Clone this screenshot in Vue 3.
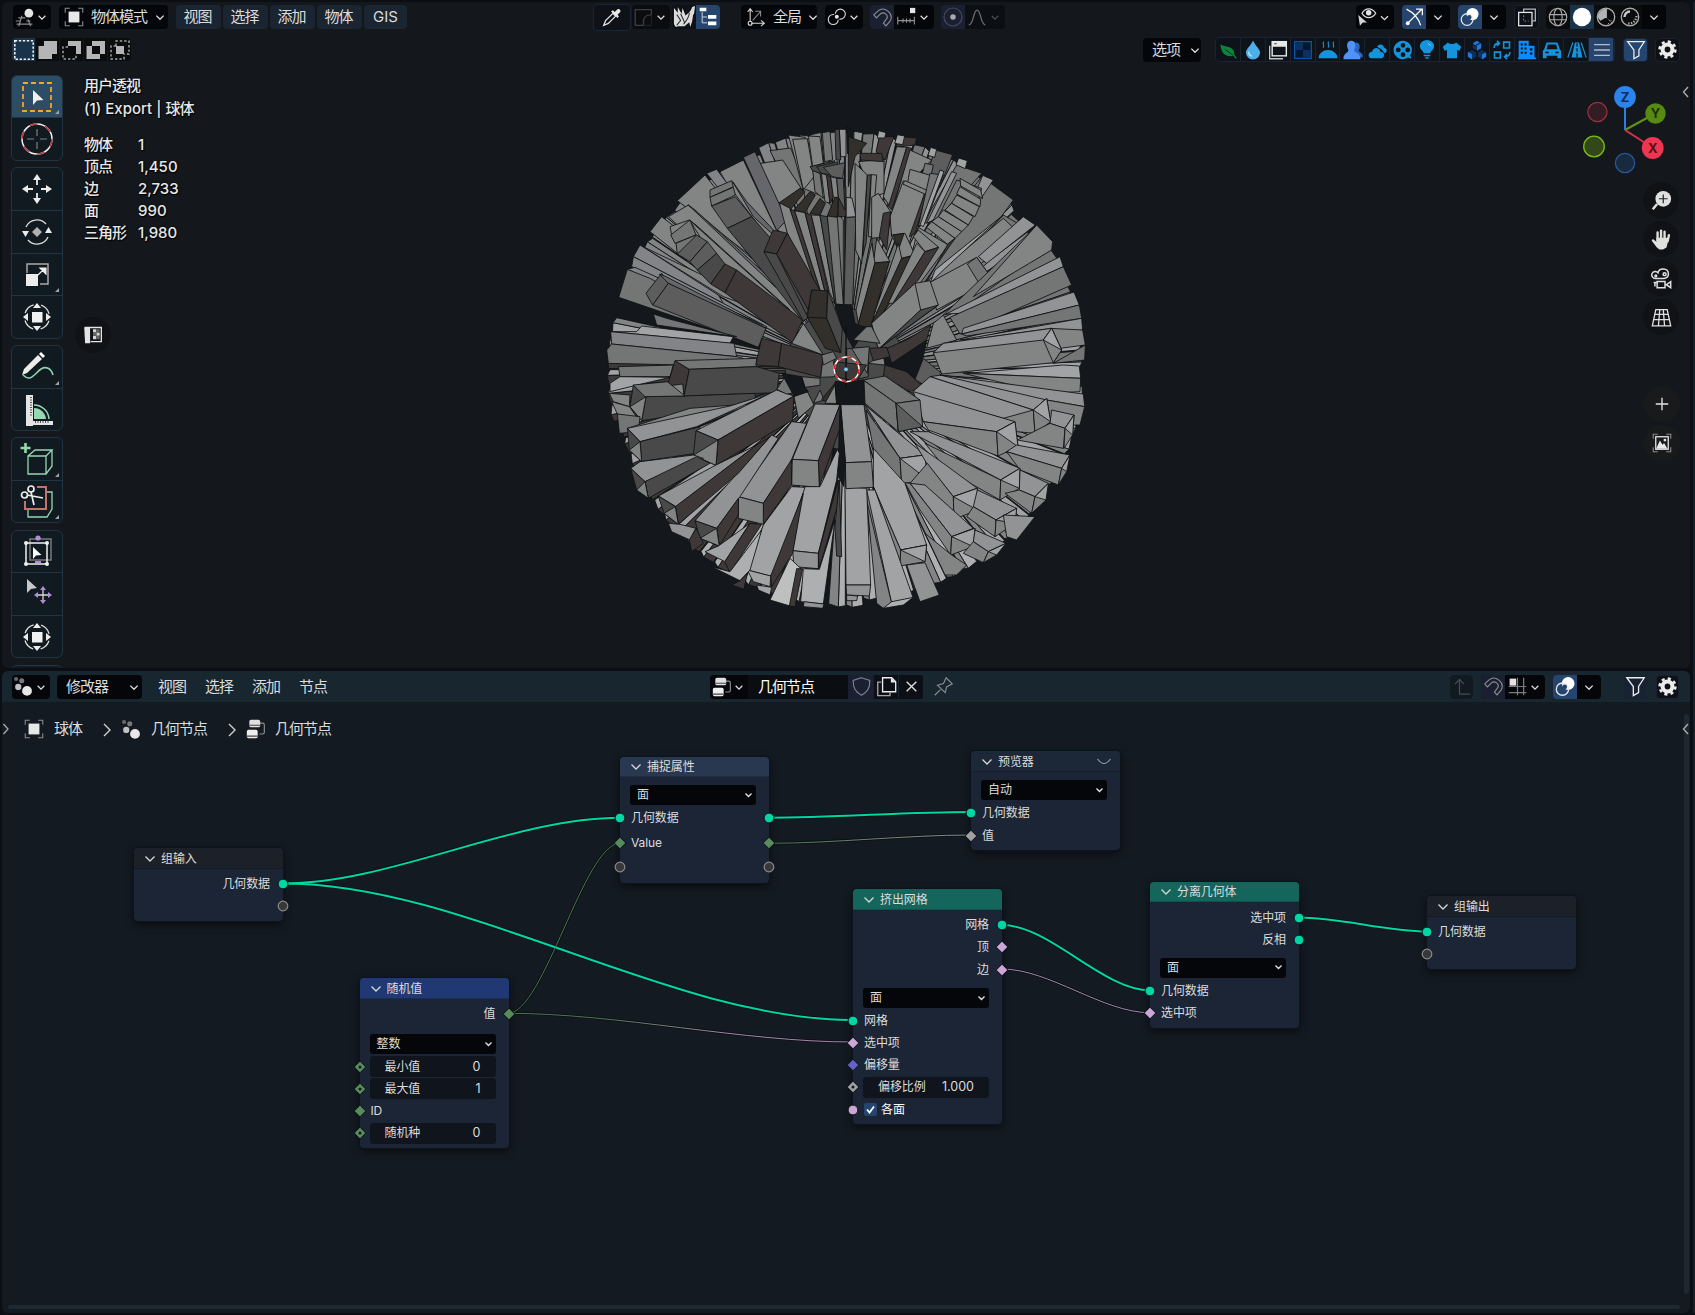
<script setup>
import { h } from 'vue'

const S = 'fill="none" stroke="#d8d8d8" stroke-width="1.3"'
const G = 'fill="none" stroke="#8a8c8f" stroke-width="1.3"'
const B = 'fill="#1593dc"'

const icons = {
  down: '<path d="M8 10.500l4 4 4-4" fill="none" stroke="#dcdcdc" stroke-width="1.500"/>',
  downDim: '<path d="M8 10.500l4 4 4-4" fill="none" stroke="#4a4d50" stroke-width="1.500"/>',
  view3d: `<path d="M5 12.500h8M3 19.500h18M9 10L5.500 22M16 14l3 8" ${G}/><path d="M2 16h5M14 16h5" ${G}/><circle cx="17" cy="7" r="5" fill="#e4e4e4"/><path d="M14.500 5a3.500 3.500 0 0 1 2-1.500" stroke="#fff" fill="none"/>`,
  object: `<path d="M1.500 7V1.500H7M17 1.500h5.500V7M22.500 17v5.500H17M7 22.500H1.500V17" ${G}/><rect x="5.500" y="5.500" width="13" height="13" fill="#e8e8e8"/>`,
  selNew: '<rect x="2.800" y="2.800" width="18.400" height="18.400" fill="none" stroke="#f2f2f2" stroke-width="1.600" stroke-dasharray="2.400 1.600"/>',
  selAdd: '<path d="M8 3h13v13h-5v5H2.500V8H8z" fill="#b4b5b5"/>',
  selSub: '<path d="M8 3h13v13h-5V8H8z" fill="#b4b5b5"/><path d="M8 9H3v12h13v-5" fill="none" stroke="#a0a1a1" stroke-width="1.500" stroke-dasharray="2.400 2"/>',
  selXor: '<path fill-rule="evenodd" d="M8 3h13v13h-5v5H2.500V8H8zM8 8v8h8V8z" fill="#b4b5b5"/>',
  selAnd: '<path d="M8 8V3h13v13h-5M8 8H3v13h13v-5" fill="none" stroke="#a0a1a1" stroke-width="1.500" stroke-dasharray="2.400 2"/><rect x="8" y="8" width="8" height="8" fill="#b4b5b5"/>',
  eyedropper: '<path d="M3 21l2-5 8-8 3 3-8 8z" fill="none" stroke="#e0e0e0" stroke-width="1.400"/><path d="M11 6l7 7 1.500-1.500-1.500-2 3-3c1-2-1-4-3-3l-3 3-2-2z" fill="#e8e8e8"/>',
  corner: '<path d="M2.500 3h18.500v6c-7 0-9 4-9 7v5H2.500z" fill="none" stroke="#3c3e41" stroke-width="1.500"/><path d="M21 9v12H12" fill="none" stroke="#26282b"/>',
  rhino: '<path d="M1 2l4 5 0-6 4 7 1-6 3 8c2-2 5-3 7-9l3-1-1 8-1 1-1 7-2 6-1-5-5 4H5l-2 1-2-3z" fill="#dcdcdc"/><path d="M4 9l4 6-4 5M8 8l4 9M17 7c0 5-3 8-6 12" stroke="#2a2d32" stroke-width="1.100" fill="none"/>',
  outliner: '<path d="M5 6v13h6M5 12h6" fill="none" stroke="#c9d2df" stroke-width="1.200"/><path d="M2 1h8v4H2zM12 9.500h10v4.500H12zM12 17.500h10V22H12z" fill="#fff"/>',
  axes: `<path d="M5 18V3M2 6l3-4 3 4M6 19.500h15M18 16l4 3.500L18 23" ${S}/><circle cx="5" cy="19.500" r="2.400" ${S}/><path d="M8 16l9-10M11 5h6.500v6.500" ${G}/>`,
  pivot: `<circle cx="7.500" cy="15" r="6" ${S}/><circle cx="16" cy="8.500" r="6" ${S}/><circle cx="11.800" cy="11.800" r="4" fill="#04060a"/><circle cx="11.800" cy="11.800" r="2.400" fill="#e4e4e4"/>`,
  magnet: `<path d="M2 9l5-4.500c7-6 18 3 14 11l-5 6-3-3 4-5.500c2-4-3.500-8-7-5.500l-5 5z" ${G}/>`,
  increments: '<path d="M2 11v9M8 13v5M12 13v5M16 13v5M21 11v9M2 15.500h19" fill="none" stroke="#8e9092" stroke-width="1.300"/><rect x="16" y="1" width="6" height="6" fill="#e4e4e4"/>',
  propEdit: '<circle cx="12" cy="12" r="9.800" fill="none" stroke="#44495c" stroke-width="1.300"/><circle cx="12" cy="12" r="3" fill="#a8aaae"/>',
  falloff: '<path d="M2 20.500c6 0 5-17 9.500-17s4 17 9.500 17" fill="none" stroke="#6a6c6f" stroke-width="1.500"/>',
  eye: '<path d="M6 7.500c4-7 12-7 16.500 0-4.500 7-12.500 7-16.500 0z" fill="none" stroke="#dcdcdc" stroke-width="1.600"/><circle cx="14" cy="7" r="3.300" fill="#e4e4e4"/><path d="M1.500 9.500l2 13 3.500-4 5 0z" fill="#d4d4d4"/>',
  gizmo: '<path d="M3 2.500c8 4 14 9 17 19.500M4 20L21 3M14.500 2.500H22V10" fill="none" stroke="#fff" stroke-width="1.500"/><circle cx="4.500" cy="19.500" r="2.300" fill="#fff"/>',
  overlay: '<circle cx="15" cy="8.500" r="7.300" fill="#fff"/><circle cx="8.500" cy="15" r="7" fill="none" stroke="#e8e8e8" stroke-width="1.500"/><circle cx="11" cy="12.500" r="2.800" fill="#23456e"/>',
  xray: '<path d="M8 6V2.500h14v14h-3" fill="none" stroke="#b8b8b8" stroke-width="1.500"/><rect x="2" y="6.500" width="16" height="16" fill="none" stroke="#e8e8e8" stroke-width="1.500"/><path d="M8 10v7h6" fill="none" stroke="#999" stroke-dasharray="2 2"/>',
  wire: '<g fill="none" stroke="#a8a8a8" stroke-width="1.300"><circle cx="12" cy="12" r="9.500"/><ellipse cx="12" cy="12" rx="4.500" ry="9.500"/><path d="M3 9.500h18M3 15h18"/></g>',
  solid: '<circle cx="12" cy="12" r="10" fill="#fff"/>',
  material: '<circle cx="12" cy="12" r="9.500" fill="none" stroke="#a8a8a8" stroke-width="1.500"/><path d="M13 13V3a9.500 9.500 0 0 0-10 9z M3 12a9 9 0 0 0 3 4l7-4z" fill="#b4b4b4"/><path d="M12 12l7 7M14 20l5-6" stroke="#a8a8a8" stroke-dasharray="2 2"/>',
  rendered: '<circle cx="12" cy="12" r="9.500" fill="none" stroke="#a8a8a8" stroke-width="1.500"/><path d="M6 12a6 6 0 0 1 6-6" stroke="#c8c8c8" stroke-width="2.600" fill="none"/><path d="M19 11a8 8 0 0 1-9 8" stroke="#a8a8a8" stroke-width="2.500" stroke-dasharray="1.500 1.500" fill="none"/>',
  leaf: '<path d="M3 5c3 3 9 2 13 5 4 3 4 6 3 9-6 1-15 1-16-14z" fill="#0a8540"/><path d="M8 11l11 8" stroke="#0b2a1a" stroke-width="1.200"/><path d="M18 17l4 5" stroke="#0a8540" stroke-width="1.600"/>',
  drop: '<path d="M12 0.500c3 7 8.500 10 8.500 14.500a8.500 8.500 0 0 1-17 0c0-4.500 5.500-7.500 8.500-14.500z" fill="#4db0ea"/><path d="M7 14a5 5 0 0 0 4 5.500" stroke="#c8ecff" stroke-width="1.500" fill="none"/>',
  windowIc: '<path d="M2 7v15.500h16" fill="none" stroke="#c4c4c4" stroke-width="1.600"/><rect x="5" y="2" width="17" height="17" fill="none" stroke="#e8e8e8" stroke-width="1.700"/><path d="M5 2h17v6H5z" fill="#e8e8e8"/><path d="M7.500 4.500h3" stroke="#222"/>',
  checker: '<rect x="2" y="2" width="20" height="20" fill="#06162e" stroke="#0a56b4" stroke-width="1.500"/><path d="M3 3h9v9H3zM12 12h9v9h-9z" fill="#0c2f66"/>',
  steam: `<path d="M0.500 22a11.500 10 0 0 1 23 0z" ${B}/><path d="M7 2c-3 3 2 4-1 7M13 2c-3 3 2 4-1 7M19 2c-3 3 2 4-1 7" stroke="#1593dc" stroke-width="1.400" fill="none"/>`,
  people: '<path d="M15 3c6-1 6 7 3.500 10l5 4v4H12z" fill="#2d64c0"/><path d="M10 1c6 0 6 7 3.500 11 0 4 6.500 2 7.500 11H0.500c0-8 6-7 6-11C4 8 4 1 10 1z" fill="#4c94f8"/>',
  cloud: `<path d="M11 8c2-4 8-3 8 1 4 1 5 5 1 7l-4-5z" ${B}/><path d="M4 22c-5-1-4-8 1-8 1-6 9-6 10 0 5 0 6 6 2 8z" ${B}/>`,
  reel: `<path fill-rule="evenodd" d="M12 1a11 11 0 1 0 6 20l4.500 1.500-2-4A11 11 0 0 0 12 1zM12 3.500a2.900 2.900 0 1 1 0 5.800 2.900 2.900 0 0 1 0-5.800zM12 14.700a2.900 2.900 0 1 1 0 5.800 2.900 2.900 0 0 1 0-5.800zM6.300 9a2.900 2.900 0 1 1 0 5.800 2.900 2.900 0 0 1 0-5.800zM17.700 9a2.900 2.900 0 1 1 0 5.800 2.900 2.900 0 0 1 0-5.800z" ${B}/>`,
  bulb: `<path d="M8 16c0-3-4.500-4-4.500-8.500a8.500 7.500 0 0 1 17 0C20.500 12 16 13 16 16z" ${B}/><path d="M8 18.500h8M10 21.500h4" stroke="#1593dc" stroke-width="1.700"/><path d="M13 4l4 3" stroke="#9bd8ff"/>`,
  shirt: `<path d="M7 3c3 2.500 7 2.500 10 0l6 5-2 5-3-1v10H6V12l-3 1-2-5z" ${B}/>`,
  cubes: '<path d="M12 1l5 3v6l-5 3-5-3V4zM6 12l5 3v5l-5 3-5-3v-5zM18 12l5 3v5l-5 3-5-3v-5z" fill="#0f2f5c"/><path d="M12 6.500l5-2.500v6l-5 3zM6 17l-5-3v6l5 3.500zM18 17l5-2v5l-5 3.500zM7 4l5-3 3 2-5 3z" fill="#2178dc"/>',
  swap: '<path d="M2.500 9.500c0-4 2-5.500 6-5.500M6 1l3 3-3 3M21.500 14.500c0 4-2 5.500-6 5.500M18 17l-3 3 3 3M14 2.500h7v7h-7zM3 14.500h7v7H3z" fill="none" stroke="#1593dc" stroke-width="1.900"/>',
  building: '<path fill-rule="evenodd" d="M2 1h12v6h7v14h2v2H1v-2h1zM4.500 4v2.500H7V4zM9 4v2.500h2.500V4zM4.500 9v2.500H7V9zM9 9v2.500h2.500V9zM4.500 14v2.500H7V14zM9 14v2.500h2.500V14zM15.500 10v2.500h3V10zM15.500 15v2.500h3V15z" fill="#0b8bff"/>',
  car: `<path fill-rule="evenodd" d="M5.500 3h13l3 8.500 1.500 1.500v9h-4.500v-3h-13v3H1v-9l1.500-1.500zM7 5.500L5.500 11h13L17 5.500zM4 14v2h4v-2zM16 14v2h4v-2z" ${B}/>`,
  road: `<path d="M7 3L1 21M17 3l6 18" stroke="#1593dc" stroke-width="1.400"/><path d="M9.500 3h5l4 18h-13z" ${B}/><path d="M12 4v4M12 10v4M12 16v5" stroke="#0c1a26" stroke-width="1.500"/>`,
  list: '<path d="M2.500 5.500h19M2.500 12h19M2.500 18.500h19" stroke="#b8bcc4" stroke-width="1.600"/>',
  filter: '<path d="M2 2h20l-6.500 10v7L9.500 22.500V12z" fill="none" stroke="#eee" stroke-width="1.500"/>',
  gear: '<circle cx="12" cy="12" r="5.600" fill="none" stroke="#ececec" stroke-width="4.600"/><circle cx="12" cy="12" r="9" fill="none" stroke="#ececec" stroke-width="3" stroke-dasharray="3.534 3.534"/>',
  nodesMod: '<circle cx="16" cy="17" r="5.600" fill="#e8e8e8"/><circle cx="6" cy="12.500" r="3.600" fill="#c0c0c0"/><circle cx="10" cy="5.500" r="2.900" fill="#77797c"/><circle cx="3.500" cy="3.500" r="2.300" fill="#6a6c70"/>',
  tree: '<path d="M16 5h4q2 0 2 2v9q0 2-2 2h-4" fill="none" stroke="#8c8e90" stroke-width="1.400"/><rect x="4" y="1" width="13" height="9" rx="2" fill="#e0e0e0"/><rect x="1" y="13" width="13" height="10" rx="2" fill="#eee"/><path d="M4 7.500h13M1 20.500h13" stroke="#444" stroke-width="1.300"/>',
  shield: '<path d="M12 2l9.500 3c0 9-2.500 13-9.500 17C5 18 2.500 14 2.500 5z" fill="none" stroke="#7c7f88" stroke-width="1.400"/>',
  copy: '<path d="M6 7H2v15.500h14V19" fill="none" stroke="#a8a8a8" stroke-width="1.500"/><path d="M7.500 2H18l4.500 4.500V18h-15z" fill="none" stroke="#eee" stroke-width="1.500"/><path d="M17 2v5.500h5.500z" fill="#eee"/>',
  close: '<path d="M6.500 6.500l11 11M17.500 6.500l-11 11" stroke="#dcdcdc" stroke-width="1.600"/>',
  pin: `<path d="M2 22l6.500-6.500M5 10.500l9 8.500 1.500-6.500L22 9l-7-7-3 6.500z" ${G}/>`,
  up: '<path d="M9 21V3M3.500 8.500L9 3l5.500 5.500M9 20.500h12.500" fill="none" stroke="#454b51" stroke-width="1.500"/>',
  grid: '<path d="M12 2v20M19 2v20M2 12h20M2 19h20" fill="none" stroke="#7a7d80" stroke-width="1.400"/><rect x="3" y="3" width="7.500" height="8" fill="#e4e4e4"/>',
  zoomIn: '<circle cx="14" cy="10" r="9" fill="#e0e0e0"/><path d="M7 16l-5 6" stroke="#e0e0e0" stroke-width="2.800"/><path d="M14 5v10M9 10h10" stroke="#222" stroke-width="1.400"/>',
  hand: '<path d="M7.500 13V4M11.500 12V2M15.500 12V3M19 14l1.500-7" stroke="#e0e0e0" stroke-width="2.700" stroke-linecap="round"/><path d="M6.200 10h13l.5 3-2 8-4 2.500h-4l-3-2.500-6-8 1.500-1.500 4 3z" fill="#e0e0e0"/>',
  camera: '<g fill="none" stroke="#e0e0e0" stroke-width="1.700"><path d="M8 5.500A6 5.500 0 1 1 15 12H5a4 4 0 1 1 3-6.500z"/><circle cx="15.500" cy="7" r="1.700"/><circle cx="5.500" cy="9" r="1"/><path d="M7 15.500h9v7H7zM3 16.500h4M4.500 16v5M22.500 15.500v7l-5-3.500z"/></g>',
  persp: '<path d="M5.500 3h13l4 18.500h-21zM4.500 8.500h15M3 14.500h18M10 3L8.500 21.500M14 3l1.500 18.500" fill="none" stroke="#e0e0e0" stroke-width="1.500"/>',
  plus: '<path d="M12 4.500v15M4.500 12h15" stroke="#e4e4e4" stroke-width="1.600"/>',
  image: `<path d="M1.500 7V1.500H7M17 1.500h5.500V7M22.500 17v5.500H17M7 22.500H1.500V17" ${G}/><rect x="4.500" y="4.500" width="15" height="15" fill="none" stroke="#e0e0e0" stroke-width="1.600"/><path d="M5 19l4.500-10 3 5 2-2 4 7z" fill="#e8e8e8"/><circle cx="15.500" cy="8.500" r="1.700" fill="#e8e8e8"/>`,
  matte: '<path d="M2 3h20v17H9" fill="none" stroke="#e4e4e4" stroke-width="1.600"/><path d="M1.500 3h7v19h-6z" fill="#e4e4e4"/><path d="M12 5h4v4h-4zM16 9h4v4h-4zM12 13h4v4h-4z" fill="#d4d4d4"/><path d="M12 9h4v4h-4zM16 13h4v4h-4zM16 5h4v4h-4z" fill="#666"/>',
  // 36-unit tool icons
  tSelect: '<rect x="4" y="4" width="28" height="28" fill="none" stroke="#f5a623" stroke-width="1.800" stroke-dasharray="5 3"/><path d="M14 11v15l4-4.500 6.500-.5z" fill="#f0f0f0"/>',
  tCursor: '<circle cx="18" cy="18" r="15" fill="none" stroke="#f0f0f0" stroke-width="1.500"/><circle cx="18" cy="18" r="15" fill="none" stroke="#b8383c" stroke-width="1.500" stroke-dasharray="7.850 7.850"/><path d="M18 8v7M18 21v7M8 18h7M21 18h7" stroke="#7c8084" stroke-width="1.200"/>',
  tMove: '<path d="M18 3l4 6h-8zM18 33l4-6h-8zM3 18l6-4v8zM33 18l-6-4v8z" fill="#ececec"/><path d="M18 9v5M18 22v5M9 18h5M22 18h5" stroke="#ececec" stroke-width="1.800"/>',
  tRotate: '<path d="M7 13a12 12 0 0 1 20-3M9 26a12 12 0 0 0 20-3" fill="none" stroke="#dcdcdc" stroke-width="1.300"/><path d="M18 13l5 5-5 5-5-5z" fill="#b4b0ae"/><path d="M3 17h7l-3.500 6zM26 19h7l-3.500-6z" fill="#ececec"/>',
  tScale: '<path d="M8 17V8h21v20h-8" fill="none" stroke="#a8aaab" stroke-width="1.500"/><path d="M7 18h12v12H7z" fill="#ececec"/><path d="M19 19l6-6M21 12h6v6z" fill="#eee" stroke="#eee" stroke-width="1.200"/>',
  tTransform: '<circle cx="18" cy="18" r="12.500" fill="none" stroke="#dcdcdc" stroke-width="1.300" stroke-dasharray="12 7.635" stroke-dashoffset="-3.800"/><rect x="13" y="13" width="10.500" height="10.500" fill="#f2f2f2"/><path d="M18 4l4 5h-8zM18 32l4-5h-8zM4 18l5-4v8zM32 18l-5-4v8z" fill="#ececec"/>',
  tAnnotate: '<path d="M4 26c8 8 12-2 18-6 5-3 10-1 12 6" fill="none" stroke="#8fd3ae" stroke-width="1.600"/><path d="M3 26l2-6L19 6l4 4L8 24z" fill="#ececec"/><path d="M20 5l2-2 4 4-2 2z" fill="#fff"/>',
  tMeasure: '<path d="M7 4h7v31H7z" fill="#e4e4e4"/><path d="M7 30h27v4H7z" fill="#e4e4e4"/><path d="M15 28V17a12 12 0 0 1 12 11z" fill="#95d8b2"/><path d="M15 14a15 15 0 0 1 15 14" fill="none" stroke="#95d8b2" stroke-width="1.500"/><path d="M12 6v20M16 31h15" stroke="#555" stroke-width="2" stroke-dasharray="1 1.500"/>',
  tCube: '<path d="M6.500 2v10M1.500 7h10" stroke="#95d8a6" stroke-width="2.600"/><path d="M9 15h18v18H9zM9 15l7-6h17l-6 6M33 9v16l-6 8" fill="none" stroke="#95d8b2" stroke-width="1.300"/>',
  tCut: '<path d="M28 8h5v17l-5 8H9v-8" fill="none" stroke="#95d8b2" stroke-width="1.300"/><path d="M18 3h9v22H6v-8" fill="none" stroke="#c4736b" stroke-width="2"/><g fill="none" stroke="#ececec" stroke-width="1.700"><circle cx="12" cy="5" r="3"/><circle cx="5.500" cy="11" r="3"/><path d="M12 8l3 13M8 11l16 3"/></g>',
  tLattice: '<path d="M11 5h21v21H11z" fill="none" stroke="#77797c" stroke-width="1.500"/><path d="M7 9h21v21H7z" fill="none" stroke="#f0f0f0" stroke-width="1.500"/><g fill="#f0f0f0"><circle cx="7" cy="9" r="2"/><circle cx="28" cy="9" r="2"/><circle cx="7" cy="30" r="2"/><circle cx="28" cy="30" r="2"/></g><circle cx="19" cy="4" r="2.600" fill="#b28dd6"/><path d="M16 28h6" stroke="#b28dd6" stroke-width="2"/><path d="M14 13v12l3-3.500 5.500-.5z" fill="#fff"/>',
  tPush: '<path d="M8 3v14l4-4 6-1z" fill="#c8c8c8"/><path d="M24 12v14M17 19h14" stroke="#d8d8d8" stroke-width="1.300"/><path d="M24 10l3 4h-6zM24 28l3-4h-6zM15 19l4-3v6zM33 19l-4-3v6z" fill="#b28dd6"/>',
}

const Icon = (props) =>
  h('svg', { class: 'ico', width: props.s || 22, height: props.s || 22, viewBox: props.n[0] === 't' && props.s === '36' ? '0 0 36 36' : '0 0 24 24', innerHTML: icons[props.n] })
Icon.props = ['n', 's']

const menus = ['视图', '选择', '添加', '物体', 'GIS']
const nodeMenus = ['视图', '选择', '添加', '节点']
const selModes = ['selNew', 'selAdd', 'selSub', 'selXor', 'selAnd']
const filters = ['leaf', 'drop', 'windowIc', 'checker', 'steam', 'people', 'cloud', 'reel', 'bulb', 'shirt', 'cubes', 'swap', 'building', 'car', 'road', 'list']
const tools = [
  [['tSelect', 1], ['tCursor', 0]],
  [['tMove', 0], ['tRotate', 0], ['tScale', 1], ['tTransform', 0]],
  [['tAnnotate', 1], ['tMeasure', 0]],
  [['tCube', 1], ['tCut', 1]],
  [['tLattice', 0], ['tPush', 0], ['tTransform', 0]],
  [['', 0]],
]
const stats = [['物体', '1'], ['顶点', '1,450'], ['边', '2,733'], ['面', '990'], ['三角形', '1,980']]

/* ---- mesh: radial prisms ---- */
const shades = {
  a: '#838584', b: '#747676', l: '#929395', L: '#a2a3a5', M: '#adafb0', W: '#bec0bf',
  d: '#5d5d5e', D: '#4a4949', k: '#3e3938', K: '#33302c', p: '#838488', q: '#66666b', o: '#14181d',
}
const CX = 766
const CY = 776
function rim() {
  const out = []
  const n = 84
  for (let i = 0; i < n; i++) {
    const a0 = (i / n) * Math.PI * 2
    const a1 = ((i + 0.94) / n) * Math.PI * 2
    const am = (i + (i % 3 === 0 ? 0.4 : 0.62)) / n * Math.PI * 2
    const deg = (a0 * 180) / Math.PI
    if (deg > 190 && deg < 196) continue
    if (deg > 91 && deg < 95) continue
    let r = 700 + ((i * 37) % 19) - 6
    if (deg > 317 && deg < 322) r = 680
    if (deg > 196 && deg < 200) r = 590
    const pt = (ang, rad) => `${(CX + Math.cos(ang) * rad).toFixed(0)},${(CY + Math.sin(ang) * rad).toFixed(0)}`
    const low = Math.sin(a0)
    const left = Math.cos(a0) < 0
    const c1 = low > 0.75 ? 'M' : low > -0.2 ? 'L' : left ? 'p' : 'l'
    const c2 = low > 0 ? (left ? 'k' : 'a') : left ? 'a' : 'b'
    const flip = left !== low < 0
    out.push([shades[flip ? c2 : c1], [pt(a0, 180), pt(a0, r), pt(am, r + 4), pt(am, 180)].join(' ')])
    out.push([shades[flip ? c1 : c2], [pt(am, 180), pt(am, r + 4), pt(a1, r - 4), pt(a1, 180)].join(' ')])
  }
  return out
}
const traced = `
b 540,122 602,114 690,330 640,320
a 595,75 645,82 690,160 700,300 640,240
a 608,88 652,86 672,200 640,240
a 655,78 690,80 700,160 668,170
b 697,68 720,64 728,150 704,155
l 748,58 768,58 768,140 752,140
D 735,58 748,58 752,150 738,150
l 792,64 818,68 810,130 790,130
o 770,50 790,60 788,140 772,130
k 868,80 912,80 885,150 858,125
L 866,62 888,68 884,84 862,84
k 938,80 980,84 975,105 915,112
L 922,74 944,78 938,104 914,100
d 1036,120 1088,134 1050,230 1010,190
L 1022,112 1040,118 1034,142 1014,136
b 1100,165 1175,190 1050,330 1000,340
L 1106,144 1132,152 1126,176 1098,164
b 1175,200 1270,270 1140,450 1000,600 900,640 1060,350
l 1178,196 1210,210 1170,270 1160,240
a 500,162 578,150 640,245 572,280 600,400 550,345
q 460,142 495,125 590,330 560,362
a 390,185 460,150 560,362 540,400 520,420
p 350,190 380,178 560,420 540,430
a 262,272 345,195 520,420 500,450
b 640,235 700,260 760,330 760,584 735,582 690,540
K 568,278 630,235 645,245 600,300
K 612,300 660,245 676,255 645,308
K 660,310 690,265 706,280 690,316
K 712,318 735,260 745,262 742,322
a 568,278 600,295 690,540 668,535 592,370
k 600,298 614,302 692,545 680,540
a 614,302 645,308 705,545 692,545
k 645,308 664,315 715,545 705,545
a 664,315 690,316 735,582 718,545
D 690,316 712,320 745,582 735,582
b 712,318 742,322 760,584 738,582
d 768,322 798,320 788,584 762,584
l 768,262 786,264 798,320 768,322
k 745,230 768,230 768,320 745,320
b 668,180 690,190 700,265 675,245
a 694,190 710,195 720,280 705,275
k 710,195 722,200 730,260 720,280
a 722,200 740,205 745,262 730,262
d 740,205 760,205 765,300 745,262
D 660,170 735,152 690,190 668,182
D 680,170 745,155 725,195 694,190
d 700,172 765,158 758,205 726,200
K 775,80 830,100 795,140 775,230
a 806,155 882,148 882,250 850,260
a 795,160 832,195 815,460 797,420
D 832,195 844,194 828,400 818,440
a 844,194 860,195 845,380 835,380
k 810,130 875,130 880,155 812,150
a 920,110 950,112 900,290 880,260
k 950,112 965,115 905,300 895,290
a 960,120 1025,150 940,240 905,310
b 1005,160 1030,165 990,350 960,330
a 960,178 1035,200 980,350 930,350
a 940,212 1004,250 958,400 905,380 900,320
k 1004,250 1015,244 975,370 958,380
a 945,212 1018,244 1004,252 938,222
b 1020,190 1060,195 1010,330 985,350
L 1050,180 1062,185 1000,350 990,345
l 1085,185 1100,190 1030,330 1010,340
b 1100,210 1175,235 1165,270 1110,250 1040,330
a 1110,205 1172,240 1178,265 1112,228
a 1110,230 1172,268 1170,290 1100,252
a 1100,255 1168,290 1155,320 1085,280
a 1085,280 1150,320 1135,345 1065,300
a 1060,300 1135,345 1115,365 1045,320
a 1045,320 1115,365 1095,385 1025,335
a 1025,335 1095,385 1075,405 1010,352
a 985,352 1075,405 960,560 930,580
k 1095,385 1075,400 985,560 970,565
a 845,262 865,250 902,305 880,385 845,385
k 880,310 902,305 890,420 868,380
d 845,385 870,382 862,410 850,450
a 860,385 900,455 850,460
a 845,400 855,460 805,640 798,600
K 855,458 898,455 842,650 803,648
a 905,375 945,370 975,435 935,445
K 910,375 942,370 925,420
a 925,400 935,445 870,610 855,605
K 935,445 975,435 870,625 845,640
a 985,360 1046,412 1005,425 970,380
a 980,400 1005,425 910,580 895,580
k 1005,425 1046,412 985,510 890,610
b 1240,315 1300,350 1290,375 1230,420 1150,500 980,620 1020,515 1160,400
a 1240,325 1290,372 1160,470 1030,560 1010,515
L 1240,315 1060,480 1020,520 1035,480
a 1160,442 1208,508 1040,600 1015,520
b 1132,462 1160,442 1208,508 1172,528
a 975,520 1020,512 1045,585 865,718 845,640
a 845,640 975,520 992,600 865,718
D 992,600 1045,585 900,690 865,718
l 1300,320 1336,345 1190,460 1165,440
b 1336,350 1385,405 1110,600 1060,615
a 1340,345 1388,395 1385,420 1150,560
l 1410,440 1420,470 1110,610 1068,612
b 1420,470 1445,525 1110,672 1080,622
l 1452,546 1468,585 1115,672 1120,655
b 1468,585 1475,625 1130,678 1115,672
l 1475,625 1478,660 1380,670 1110,690
a 1478,660 1486,705 1410,715 1380,655
b 1486,705 1484,750 1390,760
L 1420,765 1468,768 1472,805 1130,790
a 1472,805 1470,845 1370,850 1120,790
o 845,735 1010,690 1000,740 975,808 885,765
k 950,690 1022,645 1010,690 905,760 890,715
a 1030,640 1060,615 1100,690 1010,715
d 1000,745 1055,790 1010,830 975,808
k 885,765 950,785 1000,830 960,845 880,800
a 1030,728 1060,700 1385,655 1415,720 1390,758 1055,792
l 1060,700 1385,655 1360,690 1030,728
e 1360,690 1385,655 1415,720 1390,758
a 150,405 180,420 640,640 620,640 400,560
p 130,440 150,405 385,555 400,580
a 180,365 215,320 420,480 600,640 440,570
p 130,440 400,580 520,645 125,470
p 112,478 135,472 530,650 500,670
b 86,562 112,478 180,505 500,680 460,690
a 235,320 295,285 550,500 640,630 500,560
q 295,285 315,300 580,540 555,530
a 240,350 298,330 330,380 245,375
d 298,330 318,345 600,600 575,580
b 242,375 300,330 318,375 255,400
b 258,400 318,375 330,390 262,432
d 262,432 320,375 352,395 300,455
d 300,455 352,395 380,430 322,480
D 322,480 380,430 405,462 362,522
k 362,522 405,462 440,480 405,548
k 405,548 440,480 638,630 608,698
b 360,240 425,212 430,230 360,262
b 360,262 430,232 436,255 365,288
d 365,288 436,260 485,320 412,355
D 412,355 485,320 555,400 655,600 640,635 560,535
q 428,215 470,275 560,370 545,370 490,320
k 522,425 548,362 560,362 592,370 560,432
D 522,425 560,432 655,625 640,632
k 560,432 592,370 692,545 665,540 655,600
K 652,622 665,540 712,542 710,625
D 710,625 714,542 757,655 752,728
K 652,622 710,625 752,728 706,715
d 168,550 215,490 235,520 188,585
q 208,492 228,500 530,655 515,662 235,520
d 188,585 235,520 528,655 505,712
b 190,612 230,625 440,680 200,645
L 140,665 155,648 430,680 420,700 65,665
p 62,665 432,700 440,740 65,702
b 50,720 65,702 440,740 460,745 500,770 55,760
b 85,770 250,765 240,800 90,800
L 60,820 90,800 240,802 130,828 60,845
k 232,828 255,752 298,778 282,858
a 232,828 278,822 282,858
b 255,752 500,745 500,770 298,778
D 298,778 500,770 568,790 560,848 282,858
k 497,765 515,685 575,700 565,770
k 575,700 700,735 692,802 565,770
a 605,700 640,640 700,735
b 700,735 732,730 735,800 692,802
b 635,800 690,805 690,826 645,832
D 165,860 285,858 495,850 498,880 155,932
f 120,890 130,825 168,860 155,932
b 130,825 232,815 285,858 165,860
a 58,850 120,855 118,890 70,875
a 65,875 118,890 150,935 82,912
b 82,912 150,920 145,965 88,970
a 112,955 300,895 500,880 440,900 150,995
l 112,955 420,888 540,850 320,950 150,995
D 150,995 330,950 318,1030 150,1055
f 118,1020 112,955 150,995 155,1055
l 318,962 560,840 612,858 384,990
k 384,990 612,858 608,930 378,1066
f 310,1036 318,962 384,990 378,1066
b 560,838 585,800 608,850 590,852
a 612,860 652,845 672,885 625,925
b 670,880 690,840 702,870
K 695,868 735,820 720,880
a 705,880 735,825 740,880
o 575,790 635,800 645,832 655,845 612,858
o 735,815 822,810 825,884 740,882
o 735,584 785,586 795,640 830,655 790,715 757,655
b 845,650 870,700 790,690 830,650
l 1020,800 1055,795 1370,865 1330,900
l 965,848 1020,800 1330,900 1275,935
l 1050,795 1480,852 1484,890 1370,870
a 1370,870 1484,890 1470,945 1375,945
a 1240,925 1330,900 1335,970 1280,965
e 1330,900 1370,865 1382,935 1335,970
l 1385,900 1452,915 1425,955 1380,940
a 1380,940 1425,955 1420,1015 1282,990
e 1425,955 1452,915 1448,975 1422,1015
l 970,845 1275,935 1220,965 1000,935
a 1000,935 1220,965 1224,1038 1015,960
e 1220,965 1275,935 1284,1010 1224,1038
l 825,885 920,965 1005,1035 930,1045
b 828,900 930,1045 935,1122 850,1015
e 930,1045 1005,1035 1012,1108 935,1122
b 820,810 885,798 990,870 918,880
b 825,880 822,812 918,880 925,965
g 918,880 990,870 998,950 925,965
l 1280,1005 1440,1035 1415,1075 1250,1025
a 1250,1025 1415,1075 1405,1125 1290,1080
e 1415,1075 1440,1035 1430,1085 1405,1125
l 960,965 1015,965 1290,1075 1232,1110
a 1005,1000 1232,1110 1230,1170 1070,1080
e 1232,1110 1290,1075 1288,1135 1230,1170
l 1290,1080 1375,1120 1335,1160 1288,1140
a 1288,1140 1335,1160 1325,1210 1245,1150
e 1335,1160 1375,1120 1368,1170 1325,1210
l 975,1000 1060,1060 1162,1135 1090,1160 1010,1060
a 1012,1060 1090,1160 1092,1228 960,1120
e 1090,1160 1162,1135 1162,1200 1092,1228
l 1162,1140 1280,1195 1218,1230 1150,1190
a 1150,1190 1218,1230 1215,1280 1130,1220
e 1218,1230 1280,1195 1275,1240 1215,1280
l 1240,1215 1335,1220 1280,1290 1250,1280
l 1005,1125 1150,1255 1085,1280 960,1120
a 945,1118 960,1120 1085,1280 1082,1335 990,1200
e 1085,1280 1155,1255 1150,1310 1082,1335
l 1155,1260 1248,1300 1195,1325 1150,1295
a 1150,1295 1195,1325 1180,1358 1120,1330
e 1195,1325 1248,1300 1220,1335 1180,1358
a 1005,1270 1085,1335 1130,1365 1100,1395 1065,1395
L 850,1015 945,1120 1010,1305 932,1320 850,1130
a 850,1130 932,1320 930,1368 900,1310
e 932,1320 1010,1305 1005,1355 930,1368
l 950,1365 1005,1358 1048,1455 990,1475
L 830,1140 855,1140 970,1465 905,1480
a 830,1170 905,1480 880,1495 860,1480
M 905,1475 970,1462 940,1485 880,1495
L 765,1130 830,1135 842,1425 768,1425
l 768,1425 842,1425 838,1458 770,1455
l 770,1455 803,1458 800,1472 770,1472
l 752,884 822,884 845,1055 766,1058
a 766,1058 845,1055 850,1132 768,1136
o 748,900 752,884 766,1050 762,1130 745,1100
l 675,882 750,884 685,1052 607,1048
k 750,884 748,960 688,1130 685,1052
a 607,1048 685,1052 688,1132 605,1125
L 742,1018 748,1030 740,1110 685,1330 608,1322 640,1130 690,1130
k 745,1110 745,1180 688,1375 685,1330
l 608,1322 685,1330 685,1376 612,1370
D 748,1110 755,1340 740,1338 735,1250
M 640,1376 688,1378 735,1230 700,1482 632,1475
l 642,1475 702,1482 698,1495 640,1490
l 605,935 650,940 600,1060 520,1180 445,1160
k 604,1050 605,1125 520,1243 520,1180
a 445,1160 520,1180 520,1243 445,1225
L 605,1130 645,1132 560,1380 540,1398 472,1380 520,1245
k 640,1150 608,1330 545,1430 542,1398
W 600,1345 632,1375 600,1488 540,1470
k 620,1376 638,1376 615,1490 598,1488
L 472,1380 542,1398 540,1430 490,1415
L 500,1425 545,1432 540,1455 505,1440
l 545,975 565,985 450,1160 380,1255 315,1232
k 445,1165 445,1215 388,1308 380,1255
f 330,1285 315,1232 380,1255 388,1308
l 378,1065 500,1005 258,1190 205,1158
k 500,1005 540,980 445,1090 265,1243 256,1190
f 222,1210 205,1158 256,1190 265,1243
l 150,1055 310,1035 340,1045 165,1115 122,1075
D 165,1115 320,1040 360,1060 175,1165
f 140,1140 122,1075 165,1115 175,1165
l 235,1240 270,1243 318,1255 300,1290 245,1265
k 318,1255 340,1300 305,1325 298,1290
L 345,1325 385,1308 480,1240 405,1355
k 480,1240 515,1243 420,1388 404,1355
M 420,1385 515,1260 480,1380 450,1412 365,1370
k 450,1412 472,1390 462,1438 425,1425
b 695,735 730,725 740,745 700,765
d 770,716 835,712 835,800 770,815
b 785,715 838,710 832,790 800,740
k 730,755 830,765 800,815 740,800
a 835,760 880,735 885,765
k 838,715 890,712 900,740 850,752
`.trim().split('\n').flatMap((row) => {
  const [c, ...p] = row.split(' ')
  // open ends: the far inner walls show as two differently lit triangles
  if (c === 'e') return [[shades.a, p.join(' ')], [shades.L, `${p[0]} ${p[1]} ${p[2]}`]]
  if (c === 'g') return [[shades.b, p.join(' ')], [shades.d, `${p[0]} ${p[2]} ${p[3]}`]]
  if (c === 'f') return [[shades.D, p.join(' ')], [shades.a, `${p[0]} ${p[2]} ${p[3]}`]]
  return [[shades[c], p.join(' ')]]
})
const prisms = [...rim(), ...traced]

/* ---- node graph ---- */
const GEO = '#00d6a3'
const BOOL = '#cca6d6'
const INT = '#598c5c'
const nodes = [
  { t: '组输入', x: 134, y: 848, h: 73, hd: 21, c: '#1c2129', rows: [
    { k: 'out', l: '几何数据', s: 'c', c: GEO, g: 4 }, { k: 'out', l: '', s: 'e', g: .3 }] },
  { t: '捕捉属性', x: 620, y: 757, h: 126, hd: 20, c: '#283850', rows: [
    { k: 'menu', l: '面', g: 7 }, { k: 'in', l: '几何数据', s: 'c', c: GEO, g: .7, o: 1 },
    { k: 'in', l: 'Value', s: 'd', c: INT, g: 3.5, o: 1 }, { k: 'in', l: '', s: 'e', g: 1.7, o: 1 }] },
  { t: '随机值', x: 359.5, y: 978, h: 170, hd: 21, c: '#203874', rows: [
    { k: 'out', l: '值', s: 'd', c: INT, g: 4 }, { k: 'menu', l: '整数', g: 8 },
    { k: 'num', l: '最小值', v: '0', s: 'h', c: INT, g: .6 }, { k: 'num', l: '最大值', v: '1', s: 'h', c: INT, g: .3 },
    { k: 'in', l: 'ID', s: 'd', c: INT, g: .1 }, { k: 'num', l: '随机种', v: '0', s: 'h', c: INT, g: .3 }] },
  { t: '预览器', x: 971, y: 751, h: 99, hd: 21, c: '#1c2738', eye: 1, rows: [
    { k: 'menu', l: '自动', g: 7 }, { k: 'in', l: '几何数据', s: 'c', c: GEO, g: .7 }, { k: 'in', l: '值', s: 'd', c: '#a1a1a1', g: 1 }] },
  { t: '挤出网格', x: 853, y: 889, h: 235, hd: 21, c: '#14665c', rows: [
    { k: 'out', l: '网格', s: 'c', c: GEO, g: 4 }, { k: 'out', l: '顶', s: 'd', c: BOOL, g: .3 }, { k: 'out', l: '边', s: 'd', c: BOOL, g: .3 },
    { k: 'menu', l: '面', g: 6.5 }, { k: 'in', l: '网格', s: 'c', c: GEO, g: .5 }, { k: 'in', l: '选中项', s: 'd', c: BOOL, g: .2 },
    { k: 'in', l: '偏移量', s: 'd', c: '#6363c7', g: .2 }, { k: 'num', l: '偏移比例', v: '1.000', s: 'h', c: '#a1a1a1', g: .4 },
    { k: 'check', l: '各面', s: 'c', c: BOOL, g: .3 }] },
  { t: '分离几何体', x: 1150, y: 882, h: 146, hd: 20, c: '#14665c', rows: [
    { k: 'out', l: '选中项', s: 'c', c: GEO, g: 4.5 }, { k: 'out', l: '反相', s: 'c', c: GEO, g: .3 }, { k: 'menu', l: '面', g: 6 },
    { k: 'in', l: '几何数据', s: 'c', c: GEO, g: 1 }, { k: 'in', l: '选中项', s: 'd', c: BOOL, g: .3 }] },
  { t: '组输出', x: 1427, y: 896, h: 73, hd: 21, c: '#1c2129', rows: [
    { k: 'in', l: '几何数据', s: 'c', c: GEO, g: 3.5 }, { k: 'in', l: '', s: 'e', g: .3 }] },
]
const wire = (x1, y1, x2, y2) => {
  const k = (x2 - x1) * 0.32
  return `M${x1} ${y1}C${x1 + k} ${y1} ${x2 - k} ${y2} ${x2} ${y2}`
}
const links = [
  { d: wire(283, 883.5, 620, 817.7), c: GEO, w: 2 },
  { d: wire(283, 883.5, 853, 1020), c: GEO, w: 2 },
  { d: wire(769, 817.7, 971, 812), c: GEO, w: 2 },
  { d: wire(1002, 925, 1150, 990.3), c: GEO, w: 2 },
  { d: wire(1299, 917.5, 1427, 931.5), c: GEO, w: 2 },
  { d: wire(508, 1013.3, 620, 843.3), c: '#4b7850', w: 1 },
  { d: wire(508, 1013.3, 853, 1042), c: 'url(#gi)', w: 1 },
  { d: wire(769, 843.3, 971, 835), c: 'url(#gv)', w: 1 },
  { d: wire(1002, 969, 1150, 1012.7), c: '#a585ae', w: 1 },
]
</script>

<template>
  <div class="app">
    <section class="view3d">
      <div class="bar top">
        <div class="btn w38 black"><Icon n="view3d" s="21" /><Icon n="down" s="20" class="tight" /></div>
        <div class="btn mode black"><Icon n="object" s="20" /><span class="cj">物体模式</span><Icon n="down" s="22" /></div>
        <div class="menus"><span v-for="m in menus" :key="m" class="menu" :class="{ cj: m !== 'GIS', gis: m === 'GIS' }">{{ m }}</span></div>

        <div class="center">
          <div class="btn eyed"><Icon n="eyedropper" s="22" /></div>
          <div class="btn w38 black dim"><Icon n="corner" s="21" /><Icon n="down" s="20" class="tight" /></div>
          <div class="btn pair"><i><Icon n="rhino" s="23" /></i><i class="on"><Icon n="outliner" s="20" /></i></div>
          <div class="btn orient black"><Icon n="axes" s="20" /><span class="cj">全局</span><Icon n="down" s="22" /></div>
          <div class="btn w38 black pv"><Icon n="pivot" s="20" /><Icon n="down" s="20" class="tight" /></div>
          <div class="btn snap black"><i class="navy"><Icon n="magnet" s="21" /></i><Icon n="increments" s="21" /><Icon n="down" s="20" class="tight" /></div>
          <div class="btn snap prop"><i class="navy"><Icon n="propEdit" s="22" /></i><Icon n="falloff" s="21" /><Icon n="downDim" s="20" class="tight" /></div>
        </div>

        <div class="right">
          <div class="btn w38 black"><Icon n="eye" s="20" /><Icon n="down" s="21" class="tight" /></div>
          <div class="btn split black"><i class="on"><Icon n="gizmo" s="20" /></i><i><Icon n="down" s="22" /></i></div>
          <div class="btn split black"><i class="on"><Icon n="overlay" s="20" /></i><i><Icon n="down" s="22" /></i></div>
          <div class="btn one"><Icon n="xray" s="20" /></div>
          <div class="btn shade"><i><Icon n="wire" /></i><i class="teal"><Icon n="solid" /></i><i><Icon n="material" /></i><i><Icon n="rendered" /></i><i class="black"><Icon n="down" s="22" /></i></div>
        </div>
      </div>

      <div class="bar second">
        <div class="sel"><i v-for="(s, i) in selModes" :key="s" :class="{ teal: i === 0 }"><Icon :n="s" s="24" /></i></div>
        <div class="btn opt black"><span class="cj">选项</span><Icon n="down" s="22" /></div>
        <div class="filters"><i v-for="(f, i) in filters" :key="f" :class="{ on: i === 15 }"><Icon :n="f" s="20" /></i></div>
        <div class="btn one on fl"><Icon n="filter" s="20" /></div>
        <div class="btn one gr"><Icon n="gear" s="21" /></div>
      </div>

      <div class="stage">
        <div class="toolbar">
          <div v-for="(g, i) in tools" :key="i" class="tgroup" :style="{ height: g.length * 42.8 + 0.3 + 'px' }">
            <div v-for="([n, more], j) in g" :key="j" class="tool" :class="{ active: i === 0 && j === 0, more }"><Icon v-if="n" :n="n" s="36" /></div>
          </div>
        </div>
        <div class="info">
          <p class="cj">用户透视</p>
          <p class="obj">(1) Export | <span class="cj">球体</span></p>
          <dl><div v-for="s in stats" :key="s[0]"><dt class="cj">{{ s[0] }}</dt><dd>{{ s[1] }}</dd></div></dl>
        </div>
      </div>

      <div class="round matte"><Icon n="matte" s="20" /></div>

      <svg class="mesh" width="510" height="510" viewBox="0 0 1530 1530">
        <circle :cx="CX" :cy="CY" r="240" fill="#4a4a4a" />
        <g stroke="#0f1113" stroke-width="2.6" stroke-linejoin="round">
          <polygon v-for="(p, i) in prisms" :key="i" :fill="p[0]" :points="p[1]" />
        </g>
        <path d="M768 650V835" stroke="#0c0e10" stroke-width="4" />
        <circle cx="770" cy="778" r="37" fill="none" stroke="#fff" stroke-width="4.500" />
        <circle cx="770" cy="778" r="37" fill="none" stroke="#f01818" stroke-width="4.500" stroke-dasharray="14.530 14.530" />
        <circle cx="768" cy="778" r="6.500" fill="#7fd0ff" stroke="#234" stroke-width="1.500" />
      </svg>

      <svg class="gizmo" width="96" height="96" viewBox="1577 80 96 96">
        <g stroke-width="2"><path d="M1625 130V97" stroke="#2b7fe3" /><path d="M1625 130l31-17" stroke="#5e9414" /><path d="M1625 130l28 18" stroke="#d8324a" /></g>
        <circle cx="1597.400" cy="112" r="9.600" fill="#331d25" stroke="#97303f" stroke-width="1.300" />
        <circle cx="1594" cy="146.500" r="10.300" fill="#32481b" stroke="#79bd10" stroke-width="1.300" />
        <circle cx="1625" cy="163" r="9.600" fill="#182a3d" stroke="#25599c" stroke-width="1.300" />
        <circle cx="1625" cy="97" r="10.900" fill="#2b83ec" /><circle cx="1655.500" cy="113.500" r="10.200" fill="#568a12" /><circle cx="1652.700" cy="148" r="10.900" fill="#ee3650" />
        <g class="ax" text-anchor="middle"><text x="1625" y="101.500" fill="#0d2e57">Z</text><text x="1655.500" y="118" fill="#1b3004">Y</text><text x="1652.700" y="152.800" fill="#560d18">X</text></g>
      </svg>

      <div class="nav">
        <div v-for="n in ['zoomIn', 'hand', 'camera', 'persp']" :key="n" class="round"><Icon :n="n" s="21" /></div>
      </div>
      <div class="nav low">
        <div class="round"><Icon n="plus" s="20" /></div>
        <div class="round"><Icon n="image" s="20" /></div>
      </div>
      <svg class="tab3d" width="8" height="14" viewBox="0 0 8 14"><path d="M6 2L1.500 7 6 12" fill="none" stroke="#aaa" stroke-width="1.400" /></svg>
    </section>

    <section class="nodes">
      <div class="bar nbar">
        <div class="btn w38 black"><Icon n="nodesMod" s="21" /><Icon n="down" s="20" class="tight" /></div>
        <div class="btn modi black"><span class="cj">修改器</span><Icon n="down" s="22" /></div>
        <div class="nmenus"><span v-for="m in nodeMenus" :key="m" class="cj">{{ m }}</span></div>
        <div class="idblock">
          <i class="black a"><Icon n="tree" s="20" /><Icon n="down" s="20" class="tight" /></i>
          <i class="name cj">几何节点</i>
          <i class="navy b"><Icon n="shield" s="21" /></i><i class="c"><Icon n="copy" s="21" /></i><i class="c"><Icon n="close" s="21" /></i>
        </div>
        <Icon n="pin" s="21" class="pin" />
        <div class="nright">
          <div class="btn one dark"><Icon n="up" s="20" /></div>
          <div class="btn nsnap black"><i class="navy"><Icon n="magnet" s="21" /></i><Icon n="grid" s="21" /><Icon n="down" s="20" class="tight" /></div>
          <div class="btn split black s2"><i class="on"><Icon n="overlay" s="21" /></i><i><Icon n="down" s="22" /></i></div>
          <div class="btn one nf"><Icon n="filter" s="21" /></div>
          <div class="btn one gr"><Icon n="gear" s="21" /></div>
        </div>
      </div>

      <div class="crumbs">
        <svg class="toggle" width="8" height="14" viewBox="0 0 8 14"><path d="M1.500 2L6 7l-4.500 5" fill="none" stroke="#aaa" stroke-width="1.300" /></svg>
        <Icon n="object" s="20" /><span class="cj first">球体</span>
        <svg class="sep" width="10" height="14" viewBox="0 0 10 14"><path d="M2 1l6 6-6 6" fill="none" stroke="#d0d0d0" stroke-width="1.400" /></svg>
        <Icon n="nodesMod" s="21" /><span class="cj">几何节点</span>
        <svg class="sep" width="10" height="14" viewBox="0 0 10 14"><path d="M2 1l6 6-6 6" fill="none" stroke="#d0d0d0" stroke-width="1.400" /></svg>
        <Icon n="tree" s="20" /><span class="cj">几何节点</span>
      </div>

      <svg class="links" width="1690" height="644" viewBox="2 671 1690 644">
        <defs>
          <linearGradient id="gi" gradientUnits="userSpaceOnUse" x1="508" y1="0" x2="853" y2="0"><stop offset="0.250" stop-color="#4b7850" /><stop offset="0.650" stop-color="#a585ae" /></linearGradient>
          <linearGradient id="gv" gradientUnits="userSpaceOnUse" x1="769" y1="0" x2="971" y2="0"><stop offset="0" stop-color="#4b7850" /><stop offset="0.800" stop-color="#8a8a8a" /></linearGradient>
        </defs>
        <path v-for="(l, i) in links" :key="'s' + i" :d="l.d" fill="none" stroke="#0a0e12" :stroke-width="l.w + 1.600" />
        <path v-for="(l, i) in links" :key="i" :d="l.d" fill="none" :stroke="l.c" :stroke-width="l.w" />
      </svg>

      <div v-for="n in nodes" :key="n.t" class="node" :style="{ left: n.x - 2 + 'px', top: n.y - 671 + 'px', height: n.h + 'px' }">
        <div class="head" :style="{ height: n.hd + 'px', background: n.c }">
          <svg width="12" height="8" viewBox="0 0 12 8"><path d="M1.500 1.500L6 6l4.500-4.500" fill="none" stroke="#d8d8d8" stroke-width="1.300" /></svg>
          <span class="cs">{{ n.t }}</span>
          <svg v-if="n.eye" class="lid" width="16" height="8" viewBox="0 0 16 8"><path d="M1.500 1q6.500 9 13 0" fill="none" stroke="#9a9da2" stroke-width="1.200" /></svg>
        </div>
        <div v-for="(r, i) in n.rows" :key="i" class="row" :class="{ out: r.k === 'out' }" :style="{ marginTop: r.g + 'px' }">
          <span v-if="r.k === 'in' || r.k === 'out'" class="cs">{{ r.l }}</span>
          <div v-else-if="r.k === 'menu'" class="drop"><span class="cs">{{ r.l }}</span><svg width="9" height="7" viewBox="0 0 9 7"><path d="M1.500 1.500l3 3 3-3" fill="none" stroke="#e0e0e0" stroke-width="1.400" /></svg></div>
          <div v-else-if="r.k === 'num'" class="num"><span class="cs">{{ r.l }}</span><b>{{ r.v }}</b></div>
          <template v-else><svg width="13" height="13" viewBox="0 0 13 13"><rect width="13" height="13" rx="2" fill="#25456f" /><path d="M3 6.500L5.500 9.500 10 3.500" fill="none" stroke="#fff" stroke-width="1.800" /></svg><span class="cs bright">{{ r.l }}</span></template>
          <svg v-for="side in r.o ? ['l', 'r'] : [r.k === 'out' ? 'r' : 'l']" :key="side" class="sock" :class="side" width="14" height="14" viewBox="-7 -7 14 14">
            <circle v-if="r.s === 'c'" r="4.900" :fill="r.c" stroke="#0b1016" />
            <circle v-else-if="r.s === 'e'" r="4.800" fill="#383838" stroke="#8a8a8a" stroke-width="1.200" />
            <path v-else-if="r.s" d="M0-5.800L5.800 0 0 5.800-5.800 0z" :fill="r.c" stroke="#0b1016" />
            <circle v-if="r.s === 'h'" r="1.500" fill="#12161c" />
          </svg>
        </div>
      </div>

      <div class="vscroll"></div>
      <svg class="tabn" width="8" height="14" viewBox="0 0 8 14"><path d="M6 2L1.500 7 6 12" fill="none" stroke="#aaa" stroke-width="1.400" /></svg>
      <div class="hscroll"></div>
    </section>
    <aside class="edge"></aside>
  </div>
</template>

<style>
html, body { margin: 0; background: #0b0f14; overflow: hidden; }
</style>

<style scoped>
.app { position: relative; width: 1695px; height: 1315px; box-sizing: border-box; padding: 2px 0 0 2px; overflow: hidden; background: #0b0f14; color: #dcdcdc; font: 15px/22px Inter, "Noto Sans CJK SC", sans-serif; }
.app p, .app dl, .app dd { margin: 0; }
i { font-style: normal; }
.cj { letter-spacing: -1px; white-space: nowrap; }
.cs { letter-spacing: -.1px; white-space: nowrap; }
.ico { display: block; flex: none; }
.tight { margin-left: -3px; margin-right: -2px; }
.view3d { position: relative; width: 1688px; height: 666px; overflow: hidden; border-radius: 6px; background: #14181c; }
.bar { display: flex; align-items: center; }
.top { height: 30px; padding-left: 11px; }
.btn { display: flex; align-items: center; justify-content: center; box-sizing: border-box; height: 24px; border-radius: 4px; flex: none; overflow: hidden; }
.btn i, .sel i, .filters i, .idblock i { display: flex; align-items: center; justify-content: center; height: 100%; }
.black { background: #04060a; }
.navy { background: #1a2031; }
.on { background: #25456f !important; }
.teal { background: #19344a !important; }
.w38 { width: 38px; }
.mode { width: 109px; margin-left: 8px; justify-content: flex-start; padding-left: 5px; }
.mode .cj { margin: 0 2px 0 7px; }
.menus { display: flex; gap: 2px; margin-left: 8px; width: 231px; }
.menu { width: 45px; height: 24px; line-height: 23px; text-align: center; border-radius: 4px; background: #1b2531; box-sizing: border-box; padding-right: 2px; }
.gis { width: 43px; padding-right: 0; }
.center { display: flex; align-items: center; margin-left: 186px; width: 412px; }
.eyed { width: 38px; height: 27px; border: 1px solid #1b2437; background: #0e1218; }
.dim { background: #0a0c0f; margin-left: 1px; }
.pair { width: 48px; margin-left: 2px; background: #0e1218; }
.pair i { width: 24px; }
.orient { width: 76px; margin-left: 21px; justify-content: flex-start; padding-left: 5px; }
.orient .cj { margin-left: 7px; }
.orient .ico:last-child { margin-left: 1px; }
.pv { margin-left: 8px; }
.snap { width: 64px; margin-left: 7px; justify-content: flex-start; }
.snap i, .nsnap i { width: 24px; margin-right: 2px; }
.prop { background: #0b0e12; }
.right { display: flex; margin-left: 351px; gap: 8px; }
.split { width: 48px; }
.split i { width: 24px; }
.one { width: 25px; border: 1px solid #1b202c; background: #0d1117; }
.shade { width: 120px; margin-left: -1px; background: #0a0c0e; }
.shade i { width: 24px; }
.second { height: 28px; padding: 2px 0 0 10px; }
.sel { display: flex; width: 119px; height: 23px; border-radius: 4px; overflow: hidden; background: #0a0c0e; margin-top: 3px; }
.sel i { width: 24px; box-shadow: inset -1px 0 #14181c; }
.opt { width: 58px; margin-left: 1012px; margin-top: 3px; justify-content: flex-start; padding-left: 9px; }
.opt .cj { margin-right: 4px; }
.filters { display: flex; width: 400px; height: 25px; box-sizing: border-box; border: 1px solid #1a2233; border-radius: 4px; margin: 3px 0 0 14px; overflow: hidden; background: #0e1319; }
.filters i { flex: 1; box-shadow: inset -1px 0 #1a2233; }
.fl { margin: 3px 0 0 8px; }
.gr { margin: 3px 0 0 7px; }
.stage { display: flex; margin-top: 13px; }
.toolbar { display: flex; flex-direction: column; gap: 6.4px; margin-left: 9px; width: 52px; }
.tgroup { display: flex; flex-direction: column; flex: none; box-sizing: border-box; border: 1px solid #213442; border-radius: 6px; background: #111a21; overflow: hidden; }
.tool { position: relative; display: flex; flex: 1; min-height: 0; box-sizing: border-box; align-items: center; justify-content: center; border-bottom: 1px solid #213442; }
.tool:last-child { border-bottom: 0; }
.tool.active { background: #2d4c66; }
.tool.more::after { content: ""; position: absolute; right: 3px; bottom: 3px; border: 2.500px solid; border-color: transparent #a0a4a8 #a0a4a8 transparent; }
.info { margin: 0 0 0 21px; color: #e8e8e8; font-weight: 500; text-shadow: 0 0 2px #000, 1px 1px 1px #000; height: 180px; }
.info .obj { margin-top: 1px; }
.info dl { margin-top: 14px; }
.info dl div { display: flex; height: 22px; }
.info dt { width: 54px; }
.round { display: flex; align-items: center; justify-content: center; width: 36px; height: 36px; border-radius: 50%; background: #101216; }
.matte { position: absolute; left: 73px; top: 315px; }
.mesh { position: absolute; left: 588px; top: 108px; }
.gizmo { position: absolute; left: 1575px; top: 78px; }
.ax { font: 700 13px Inter, sans-serif; }
.nav { position: absolute; left: 1641px; top: 180px; display: flex; flex-direction: column; gap: 3px; }
.nav.low { left: 1642px; top: 384px; }
.low .round { background: #191a1b; }
.tab3d { position: absolute; left: 1680px; top: 83px; }

.nodes { position: relative; width: 1688px; height: 642px; margin-top: 3px; overflow: hidden; border-radius: 6px; background: #131a21; }
.nbar { height: 31px; padding-left: 10px; background: #182630; }
.modi { width: 85px; margin-left: 7px; justify-content: flex-start; padding-left: 9px; }
.modi .cj { margin-right: 15px; }
.nmenus { display: flex; gap: 20px; margin-left: 16px; width: 173px; }
.nmenus span { width: 27px; }
.idblock { display: flex; height: 24px; margin-left: 379px; border-radius: 4px; overflow: hidden; }
.a { width: 38px; }
.name { width: 100px; box-sizing: border-box; padding-left: 10px; justify-content: flex-start !important; background: #0a0e13; color: #fff; }
.b { width: 26px; }
.c { width: 24px; margin-right: 1px; background: #0c1016; }
.pin { margin-left: 9px; }
.nright { display: flex; margin-left: auto; padding-right: 11px; align-items: center; }
.nright .one { margin-top: 0; width: 23px; }
.nright .dark { background: #121a21; border-color: #121a21; }
.nsnap { width: 64px; margin-left: 8px; justify-content: flex-start; }
.s2 { margin-left: 8px; }
.nright .nf { margin-left: 23px; background: #182232; border-color: #182232; }
.nright .gr { margin-left: 9px; }
.crumbs { display: flex; align-items: center; height: 54px; }
.toggle { margin: 0 14px 0 0; }
.crumbs .cj { margin-left: 9px; }
.crumbs .first { margin-left: 10px; }
.sep { margin: 2px 9px 0 20px; }
.links { position: absolute; left: 0; top: 0; }
.node { position: absolute; width: 149px; border-radius: 4px; background: #1b2535; box-shadow: 0 0 0 1px #0d131b, 0 3px 8px rgba(0,0,0,.6); font-size: 12px; line-height: 20px; }
.head { display: flex; align-items: center; box-sizing: border-box; padding: 1px 0 0 10px; border-radius: 4px 4px 0 0; border-bottom: 1px solid rgba(0,0,0,.2); }
.head .cs { margin-left: 5px; }
.lid { margin-left: auto; margin-right: 8px; }
.row { position: relative; display: flex; align-items: center; height: 22px; padding: 0 13px 0 11px; }
.out { justify-content: flex-end; }
.bright { color: #fff; margin-left: 4px; }
.drop, .num { display: flex; align-items: center; box-sizing: border-box; width: 126px; flex: none; height: 20px; padding: 0 3px 0 7px; border-radius: 3px; background: #04060a; justify-content: space-between; margin-left: -1px; }
.num { background: #10141d; padding: 0 15px; height: 21px; }
.num b { font-weight: 400; font-size: 12.500px; }
.sock { position: absolute; top: 4px; }
.sock.l { left: -7px; }
.sock.r { right: -7px; }
.vscroll { position: absolute; right: 1px; top: 43px; width: 5px; height: 580px; border-radius: 3px; background: #1e2831; }
.hscroll { position: absolute; left: 6px; bottom: 4px; width: 1672px; height: 4px; border-radius: 2px; background: #1e2831; }
.tabn { position: absolute; left: 1680px; top: 51px; }
.edge { position: absolute; right: 0; top: 2px; width: 2px; height: 1311px; background: #14202a; }
</style>
